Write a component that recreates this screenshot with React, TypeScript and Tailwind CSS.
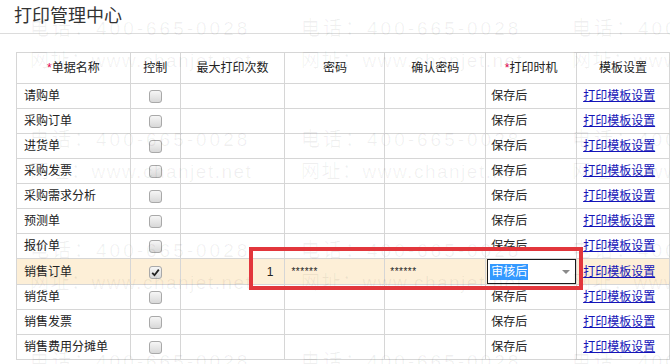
import React from 'react';

type Row = {
  name: string;
  checked?: boolean;
  highlight?: boolean;
  count?: string;
  pwd?: string;
  confirm?: string;
};

const ROWS: Row[] = [
  { name: '请购单' },
  { name: '采购订单' },
  { name: '进货单' },
  { name: '采购发票' },
  { name: '采购需求分析' },
  { name: '预测单' },
  { name: '报价单' },
  { name: '销售订单', checked: true, highlight: true, count: '1', pwd: '******', confirm: '******' },
  { name: '销货单' },
  { name: '销售发票' },
  { name: '销售费用分摊单' },
];

const WATERMARK_X = [30, 301, 572];
const WATERMARK_Y = [18, 129, 240, 351];

function Box({ checked }: { checked?: boolean }) {
  return (
    <span className="inline-flex items-center justify-center w-[13px] h-[13px] rounded-[3px] border border-[#a9a9a9] bg-gradient-to-b from-[#f6f6f6] to-[#d8d8d8] align-middle">
      {checked && (
        <svg width="9" height="9" viewBox="0 0 9 9">
          <path d="M1.2 4.8 L3.5 7.2 L7.8 1.6" fill="none" stroke="#222" strokeWidth="1.8" />
        </svg>
      )}
    </span>
  );
}

function Star() {
  return <span className="text-[#e0004d]">*</span>;
}

export default function App() {
  const cell = 'border border-[#d6d6d6] h-[25px] p-0';
  const head = 'border border-[#d6d6d6] h-[31px] p-0 font-normal text-center';

  return (
    <div
      className="relative w-[670px] h-[364px] overflow-hidden bg-white text-[#222]"
      style={{ fontFamily: '"Liberation Sans", "Noto Sans CJK SC", sans-serif' }}
    >
      <div className="h-[34px] border-b border-[#dcdcdc] pl-[14px] pt-[5px] text-[18px] leading-[22px] text-[#333]">
        打印管理中心
      </div>

      <div className="pl-4 pt-[18px]">
        <table className="border-collapse table-fixed text-[12px] leading-[14px]">
          <colgroup>
            <col className="w-[114px]" />
            <col className="w-[50px]" />
            <col className="w-[105px]" />
            <col className="w-[100px]" />
            <col className="w-[101px]" />
            <col className="w-[90px]" />
            <col className="w-[93px]" />
          </colgroup>
          <thead>
            <tr>
              <th className={head}><Star />单据名称</th>
              <th className={head}>控制</th>
              <th className={head}>最大打印次数</th>
              <th className={head}>密码</th>
              <th className={head}>确认密码</th>
              <th className={head}><Star />打印时机</th>
              <th className={head}>模板设置</th>
            </tr>
          </thead>
          <tbody>
            {ROWS.map((r) => (
              <tr key={r.name} className={r.highlight ? 'bg-[#fdefd7]' : ''}>
                <td className={`${cell} pl-[7px]`}>{r.name}</td>
                <td className={`${cell} text-center`}><Box checked={r.checked} /></td>
                <td className={`${cell} text-right pr-[11px]`}>{r.count}</td>
                <td className={`${cell} pl-[6px] text-[10px] tracking-[0.5px]`}>{r.pwd}</td>
                <td className={`${cell} pl-[5px] text-[10px] tracking-[0.5px]`}>{r.confirm}</td>
                <td className={`${cell} pl-[5px]`}>
                  {r.highlight ? (
                    <div className="relative ml-[-4px] w-[89px] h-[25px] border border-[#1a1a1a] bg-white flex items-center pl-[2px]">
                      <span className="bg-[#3399ff] text-white px-[1px] leading-[16px]">审核后</span>
                      <svg className="absolute right-[5px] top-[10px]" width="8" height="4" viewBox="0 0 8 4">
                        <path d="M0 0 L8 0 L4 4 Z" fill="#8a8a8a" />
                      </svg>
                    </div>
                  ) : (
                    '保存后'
                  )}
                </td>
                <td className={`${cell} pl-[6px]`}>
                  <a className="text-[#1414b8] underline">打印模板设置</a>
                </td>
              </tr>
            ))}
          </tbody>
        </table>
      </div>

      {/* watermark */}
      {WATERMARK_Y.map((y) =>
        WATERMARK_X.map((x) => (
          <div
            key={`${x}-${y}`}
            className="absolute pointer-events-none whitespace-nowrap text-[19px] leading-[22px] tracking-[3px] text-black/[0.06]"
            style={{ left: x, top: y }}
          >
            <div>电话：400-665-0028</div>
            <div className="mt-[10px] tracking-[1.5px]">网址：www.chanjet.net</div>
          </div>
        ))
      )}

      {/* red highlight frame */}
      <div className="absolute left-[249px] top-[247px] w-[334px] h-[43px] border-[4px] border-[#e2363c] pointer-events-none" />
    </div>
  );
}
